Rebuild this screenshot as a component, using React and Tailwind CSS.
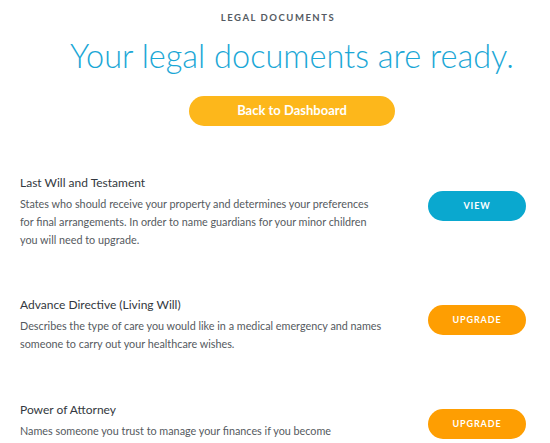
export default function App() {
  const items = [
    {
      title: "Last Will and Testament",
      lines: [
        "States who should receive your property and determines your preferences",
        "for final arrangements. In order to name guardians for your minor children",
        "you will need to upgrade.",
      ],
      action: "VIEW",
      color: "bg-[#0aa8cf]",
      mt: "mt-[49px]",
      bmt: "mt-[16px]",
    },
    {
      title: "Advance Directive (Living Will)",
      lines: [
        "Describes the type of care you would like in a medical emergency and names",
        "someone to carry out your healthcare wishes.",
      ],
      action: "UPGRADE",
      color: "bg-[#fe9e02]",
      mt: "mt-[48px]",
      bmt: "mt-[8px]",
    },
    {
      title: "Power of Attorney",
      lines: ["Names someone you trust to manage your finances if you become"],
      action: "UPGRADE",
      color: "bg-[#fe9e02]",
      mt: "mt-[49px]",
      bmt: "mt-[7px]",
    },
  ];
  return (
    <div className="w-[550px] h-[443px] overflow-hidden bg-white font-['Lato',sans-serif]">
      <div className="flex flex-col items-center pt-[12px] ml-[6px]">
        <div className="text-[9.5px] font-bold tracking-[0.16em] text-[#555b63] leading-[12px]">
          LEGAL DOCUMENTS
        </div>
      </div>
      <div className="flex flex-col items-center ml-[34px]">
        <h1 className="mt-[12px] text-[32.5px] font-light text-[#1ba7d6] leading-[40px] whitespace-nowrap">
          Your legal documents are ready.
        </h1>
        <button className="mt-[20px] w-[206px] h-[30px] rounded-full bg-[#fdb71b] text-white text-[13px] font-bold">
          Back to Dashboard
        </button>
      </div>
      <div className="pl-[20px] pr-[24px]">
        {items.map((it) => (
          <div key={it.title} className={`flex items-start justify-between ${it.mt}`}>
            <div className="w-[360px]">
              <div className="text-[12px] text-[#333840] leading-[16px]">{it.title}</div>
              <p className="mt-[4px] text-[10.8px] text-[#555a60] leading-[18px] whitespace-nowrap">
                {it.lines.map((l, i) => (
                  <span key={i} className="block">{l}</span>
                ))}
              </p>
            </div>
            <button
              className={`${it.bmt} w-[98px] h-[30px] rounded-full ${it.color} text-white text-[9px] font-bold tracking-[0.1em]`}
            >
              {it.action}
            </button>
          </div>
        ))}
      </div>
    </div>
  );
}
